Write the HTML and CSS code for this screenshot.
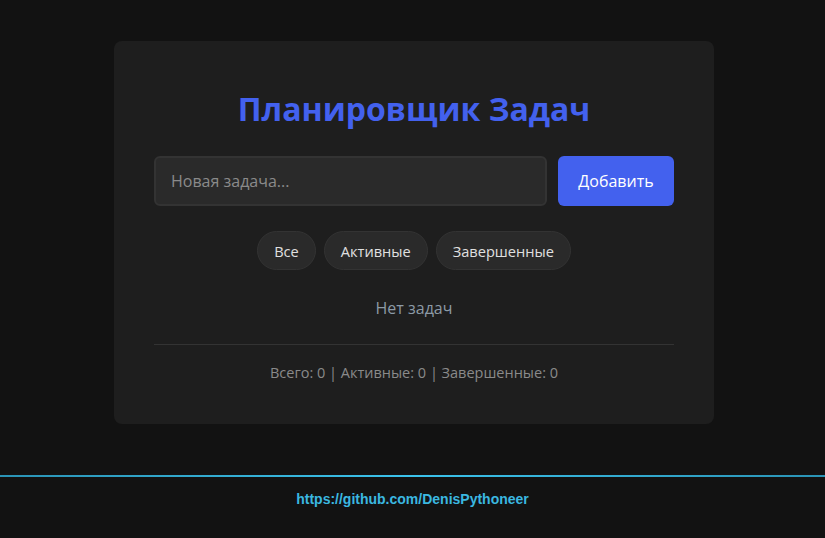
FILE: index.html
```html
<!DOCTYPE html>
<html lang="ru">
<head>
<meta charset="utf-8">
<title>Планировщик Задач</title>
<link rel="stylesheet" href="styles.css">
</head>
<body>
<main class="page">
  <section class="card">
    <h1 class="title">Планировщик Задач</h1>
    <div class="add-row">
      <input class="task-input" type="text" placeholder="Новая задача...">
      <button class="add-btn">Добавить</button>
    </div>
    <div class="filters">
      <button class="filter">Все</button>
      <button class="filter">Активные</button>
      <button class="filter">Завершенные</button>
    </div>
    <p class="empty">Нет задач</p>
    <div class="stats">Всего: 0 | Активные: 0 | Завершенные: 0</div>
  </section>
</main>
<footer class="footer">
  <a class="footer-link" href="#">https://github.com/DenisPythoneer</a>
</footer>
</body>
</html>
```

FILE: styles.css
```css
html, body {
  margin: 0;
  padding: 0;
  background: #121212;
  font-family: "Open Sans", "Noto Sans", sans-serif;
  color: #e0e0e0;
}
.page {
  display: flex;
  justify-content: center;
  padding-top: 41px;
  padding-left: 3px;
  height: 475px;
  box-sizing: border-box;
}
.card {
  width: 600px;
  height: 383px;
  box-sizing: border-box;
  background: #1e1e1e;
  border-radius: 8px;
  padding: 40px;
  display: flex;
  flex-direction: column;
}
.title {
  margin: 0;
  text-align: center;
  font-size: 32px;
  font-weight: 700;
  color: #4361ee;
  line-height: 56px;
}
.add-row {
  display: flex;
  gap: 11px;
  margin-top: 19px;
}
.task-input {
  flex: 1;
  height: 50px;
  box-sizing: border-box;
  background: #2a2a2a;
  border: 2px solid #333;
  border-radius: 6px;
  padding: 0 15px;
  font-family: inherit;
  font-size: 16px;
  color: #e0e0e0;
  outline: none;
}
.task-input::placeholder {
  color: #8a8a8a;
}
.add-btn {
  width: 116px;
  height: 50px;
  border: none;
  border-radius: 6px;
  background: #4361ee;
  color: #fff;
  font-family: inherit;
  font-size: 16px;
}
.filters {
  display: flex;
  justify-content: center;
  gap: 8px;
  margin-top: 25px;
}
.filter {
  height: 39px;
  padding: 0 16px;
  border: 1px solid #333;
  border-radius: 20px;
  background: #2a2a2a;
  color: #e0e0e0;
  font-family: inherit;
  font-size: 14.6px;
}
.empty {
  margin: 0;
  margin-top: 26px;
  text-align: center;
  font-size: 16px;
  color: #8c9aa6;
  line-height: 24px;
  padding-bottom: 24px;
  border-bottom: 1px solid #333;
}
.stats {
  text-align: center;
  font-size: 14.5px;
  color: #8a8a8a;
  margin-top: 18px;
}
.footer {
  border-top: 2px solid #29b6e0;
  border-image: linear-gradient(90deg, #2a93b5, #3bc3ec 50%, #2a93b5) 1;
  text-align: center;
  padding-top: 10px;
  height: 63px;
  box-sizing: border-box;
}
.footer-link {
  font-family: "Liberation Sans", Arial, sans-serif;
  font-weight: 700;
  font-size: 14px;
  color: #3bb8e0;
  text-decoration: none;
}
```
